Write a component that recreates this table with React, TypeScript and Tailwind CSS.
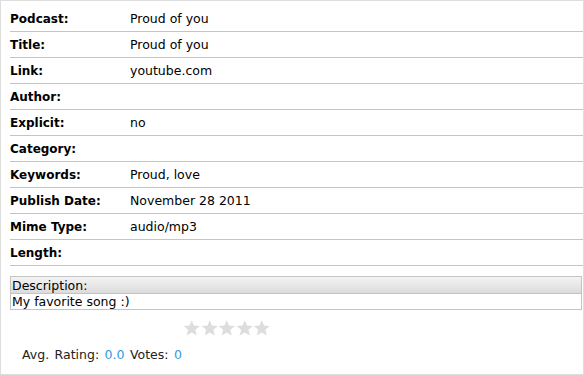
import React from "react";

const rows: [string, string][] = [
  ["Podcast:", "Proud of you"],
  ["Title:", "Proud of you"],
  ["Link:", "youtube.com"],
  ["Author:", ""],
  ["Explicit:", "no"],
  ["Category:", ""],
  ["Keywords:", "Proud, love"],
  ["Publish Date:", "November 28 2011"],
  ["Mime Type:", "audio/mp3"],
  ["Length:", ""],
];

function Star() {
  return (
    <svg width="17.5" height="16" viewBox="0 0 24 22.5" className="block">
      <path
        d="M12 0.3 L15.1 7.8 L23.4 8.4 L17.1 13.8 L19.1 21.9 L12 17.5 L4.9 21.9 L6.9 13.8 L0.6 8.4 L8.9 7.8 Z"
        fill="#dddddd"
      />
    </svg>
  );
}

export default function App() {
  return (
    <div
      className="w-[584px] h-[375px] border border-[#dddddd] bg-white text-[12.5px] text-black overflow-hidden"
      style={{ fontFamily: '"DejaVu Sans", Verdana, sans-serif' }}
    >
      <div className="pl-[9px] pt-[5px]">
        {rows.map(([k, v]) => (
          <div
            key={k}
            className="flex h-[26px] items-center border-b border-[#c4c4c4] pt-[1px]"
          >
            <div className="w-[120px] font-bold text-[12px]">{k}</div>
            <div>{v}</div>
          </div>
        ))}
      </div>
      <div className="mt-[10px] ml-[9px] mr-[1px] border border-[#c4c4c4]">
        <div className="h-[17px] leading-[17px] pl-[1px] border-b border-[#c4c4c4] bg-gradient-to-b from-[#f4f4f4] to-[#dcdcdc]">
          Description:
        </div>
        <div className="h-[15px] leading-[15px] pl-[1px]">My favorite song :)</div>
      </div>
      <div className="flex mt-[10px] pl-[182px]">
        <Star />
        <Star />
        <Star />
        <Star />
        <Star />
      </div>
      <div className="mt-[10px] pl-[21px] text-[#222] [word-spacing:1.5px]">
        Avg. Rating: <span className="text-[#3399dd]">0.0</span> Votes:{" "}
        <span className="text-[#3399dd]">0</span>
      </div>
    </div>
  );
}
